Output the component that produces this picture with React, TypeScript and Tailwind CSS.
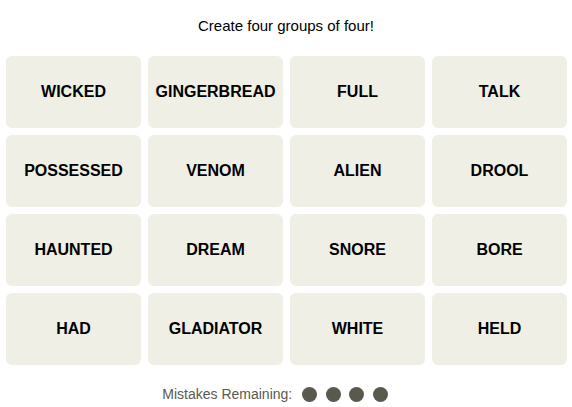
const words = [
  "WICKED", "GINGERBREAD", "FULL", "TALK",
  "POSSESSED", "VENOM", "ALIEN", "DROOL",
  "HAUNTED", "DREAM", "SNORE", "BORE",
  "HAD", "GLADIATOR", "WHITE", "HELD",
];

export default function App() {
  return (
    <div className="w-[572px] h-[407px] bg-white font-['Liberation_Sans',Arial,sans-serif] overflow-hidden">
      <p className="pt-[16px] text-center text-[15px] leading-[20px] text-black">
        Create four groups of four!
      </p>
      <div className="mt-[20px] ml-[6px] grid grid-cols-[repeat(4,135px)] grid-rows-[repeat(4,72px)] gap-x-[7px] gap-y-[7px]">
        {words.map((w) => (
          <button
            key={w}
            className="flex items-center justify-center rounded-[6px] bg-[#efefe6] text-[16px] font-bold text-black"
          >
            {w}
          </button>
        ))}
      </div>
      <div className="mt-[21px] flex items-center justify-center gap-[10px] pr-[22px]">
        <span className="text-[14px] leading-[16px] text-[#5a594e]">Mistakes Remaining:</span>
        <div className="flex gap-[8.5px]">
          {[0, 1, 2, 3].map((i) => (
            <span key={i} className="h-[15px] w-[15px] rounded-full bg-[#5a594e]" />
          ))}
        </div>
      </div>
    </div>
  );
}
